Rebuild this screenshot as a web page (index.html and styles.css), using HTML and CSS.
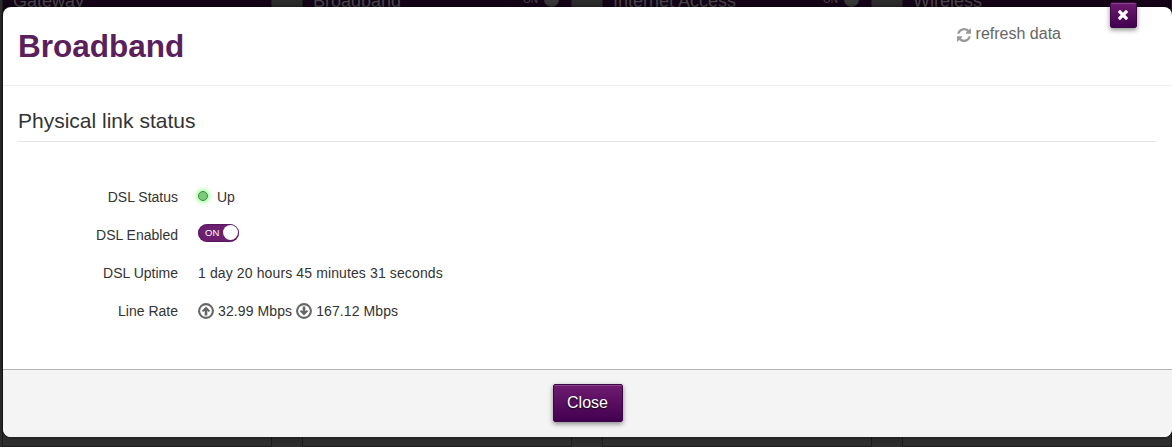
FILE: index.html
```html
<!DOCTYPE html>
<html lang="en">
<head>
<meta charset="utf-8">
<title>Broadband</title>
<link rel="stylesheet" href="styles.css">
</head>
<body>
<div class="dashboard">
  <div class="card"><div class="card-head"><span>Gateway</span></div></div>
  <div class="card"><div class="card-head"><span>Broadband</span><span class="card-switch">ON<i></i></span></div></div>
  <div class="card"><div class="card-head"><span>Internet Access</span><span class="card-switch">ON<i></i></span></div></div>
  <div class="card"><div class="card-head"><span>Wireless</span></div></div>
</div>
<div class="modal">
  <header class="modal-header">
    <h1 class="title">Broadband</h1>
    <a class="refresh"><svg class="refresh-icon" viewBox="0 0 1536 1536"><path d="M1511 928q0 5-1 7-64 268-268 434.5t-478 166.5q-146 0-282.5-55t-243.5-157l-129 129q-19 19-45 19t-45-19-19-45v-448q0-26 19-45t45-19h448q26 0 45 19t19 45-19 45l-137 137q71 66 161 102t187 36q134 0 250-65t186-179q11-17 53-117 8-23 30-23h192q13 0 22.5 9.5t9.5 22.5zm25-800v448q0 26-19 45t-45 19h-448q-26 0-45-19t-19-45 19-45l138-138q-148-137-349-137-134 0-250 65t-186 179q-11 17-53 117-8 23-30 23h-199q-13 0-22.5-9.5t-9.5-22.5v-7q65-268 270-434.5t480-166.5q146 0 284 55.5t245 156.5l130-129q19-19 45-19t45 19 19 45z"/></svg><span>refresh data</span></a>
  </header>
  <button class="close-x" aria-label="Close"><svg viewBox="302 366 1188 1188"><path d="M1490 1322q0 40-28 68l-136 136q-28 28-68 28t-68-28l-294-294-294 294q-28 28-68 28t-68-28l-136-136q-28-28-28-68t28-68l294-294-294-294q-28-28-28-68t28-68l136-136q28-28 68-28t68 28l294 294 294-294q28-28 68-28t68 28l136 136q28 28 28 68t-28 68l-294 294 294 294q28 28 28 68z"/></svg></button>
  <main class="modal-body">
    <h2 class="legend">Physical link status</h2>
    <dl class="fields">
      <dt>DSL Status</dt>
      <dd><span class="light"></span><span>Up</span></dd>
      <dt>DSL Enabled</dt>
      <dd><span class="switch"><span class="switch-text">ON</span><span class="knob"></span></span></dd>
      <dt>DSL Uptime</dt>
      <dd class="uptime">1 day 20 hours 45 minutes 31 seconds</dd>
      <dt>Line Rate</dt>
      <dd>
        <svg class="rate-icon" viewBox="0 0 16 16"><circle cx="8" cy="8" r="6.9"/><path d="M8 3.4 12.2 7.8 10.8 9.1 9.3 7.8V12.4H6.7V7.8L5.2 9.1 3.8 7.8Z"/></svg><span class="rate">32.99 Mbps</span>
        <svg class="rate-icon" viewBox="0 0 16 16"><circle cx="8" cy="8" r="6.9"/><path d="M8 12.6 3.8 8.2 5.2 6.9 6.7 8.2V3.6H9.3V8.2L10.8 6.9 12.2 8.2Z"/></svg><span class="rate">167.12 Mbps</span>
      </dd>
    </dl>
  </main>
  <footer class="modal-footer"><button class="close-btn">Close</button></footer>
</div>
</body>
</html>
```
FILE: styles.css
```css
* { box-sizing: border-box; }
body {
  margin: 0;
  height: 447px;
  overflow: hidden;
  background: #2c2c2c;
  color: #333;
  font: 14px/20px "Liberation Sans", Arial, sans-serif;
}
h1, h2, dl, dd { margin: 0; }
button { padding: 0; font-family: inherit; }
.dashboard {
  display: flex;
  gap: 30px;
  height: 447px;
  padding-left: 2px;
}
.card {
  flex: none;
  width: 270px;
  background: #2e2e2e;
  border: 1px solid #1c1c1c;
  border-top: 0;
}
.card-head {
  display: flex;
  justify-content: space-between;
  height: 30px;
  padding: 0 12px 0 10px;
  background: #150318;
  color: #484848;
  font-size: 18px;
  line-height: 20px;
}
.card-head > span { margin-top: -9px; }
.card-head .card-switch {
  display: flex;
  gap: 6px;
  margin-top: -10px;
  font-size: 10px;
}
.card-switch i {
  width: 15px;
  height: 15px;
  margin-top: 2px;
  border-radius: 50%;
  background: #383838;
}
.modal {
  position: absolute;
  inset: 7px 0 10px 3px;
  display: flex;
  flex-direction: column;
  border-radius: 8px;
  background: #fff;
  box-shadow: 0 0 4px rgba(0, 0, 0, .6);
}
.modal-header {
  display: flex;
  justify-content: space-between;
  height: 79px;
  padding: 19px 111px 0 15px;
  border-bottom: 1px solid #eee;
}
.title {
  color: #5a205c;
  font-size: 31.5px;
  line-height: 40px;
}
.refresh {
  display: flex;
  gap: 5px;
  height: 20px;
  margin-top: -2px;
  color: #666;
  font-size: 16px;
}
.refresh-icon {
  width: 14px;
  height: 14px;
  margin-top: 4px;
  fill: #999;
}
.close-x, .close-btn {
  border: 1px solid #3d0845;
  border-radius: 2px;
  background: linear-gradient(#6e1c70, #430050);
  box-shadow: inset 0 1px 0 rgba(255, 255, 255, .18), 0 2px 5px rgba(0, 0, 0, .45);
  color: #fff;
}
.close-x {
  position: absolute;
  top: -5px;
  right: 35px;
  display: grid;
  place-items: center;
  width: 27px;
  height: 26px;
  padding-right: 1px;
}
.close-x svg { width: 10px; height: 10px; fill: #fff; }
.modal-body { flex: 1; padding: 15px 16px 0 15px; }
.legend {
  height: 41px;
  border-bottom: 1px solid #e5e5e5;
  font-size: 21px;
  font-weight: 400;
  line-height: 40px;
}
.fields {
  display: grid;
  grid-template-columns: 160px 1fr;
  grid-auto-rows: 38px;
  column-gap: 20px;
  padding-top: 45px;
}
.fields dt { text-align: right; }
.fields dd { display: flex; }
.fields .uptime { letter-spacing: .12px; }
.light {
  width: 10px;
  height: 10px;
  margin: 4px 9px 0 0;
  border: 1px solid #3f8f3f;
  border-radius: 50%;
  background: #7ccb7c;
  box-shadow: 0 0 5px 1px #7dff7d;
}
.switch {
  display: flex;
  justify-content: space-between;
  width: 41px;
  height: 18px;
  margin-top: -1px;
  padding: 1px 1px 1px 7px;
  border-radius: 9px;
  background: #6d1f70;
  box-shadow: inset 0 0 2px #30003a;
  color: #fff;
  font-size: 9.5px;
  line-height: 16px;
}
.knob {
  width: 15px;
  height: 15px;
  border-radius: 50%;
  background: #fff;
}
.rate-icon {
  flex: none;
  width: 16px;
  height: 16px;
  margin: 2px 4px 0 0;
  fill: #666;
}
.rate-icon circle { fill: none; stroke: #666; stroke-width: 2.1; }
.rate { margin-right: 4px; letter-spacing: .1px; }
.modal-footer {
  display: flex;
  justify-content: center;
  height: 68px;
  padding-top: 14px;
  border-top: 1px solid #b5b5b5;
  border-radius: 0 0 8px 8px;
  background: #f4f4f4;
}
.close-btn {
  width: 70px;
  height: 38px;
  font-size: 16px;
  text-shadow: 0 1px 2px #000;
}
```
